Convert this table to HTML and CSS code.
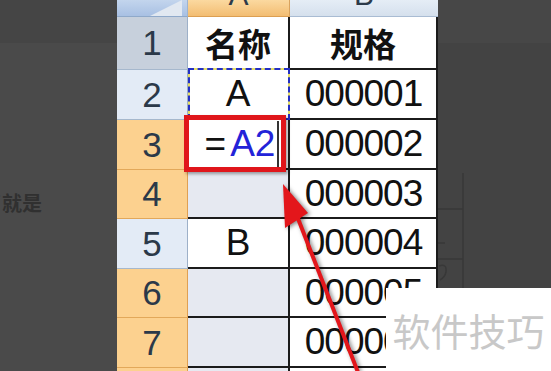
FILE: index.html
```html
<!DOCTYPE html>
<html lang="zh">
<head>
<meta charset="utf-8">
<title>Excel</title>
<link rel="stylesheet" href="styles.css">
</head>
<body>
<div class="page">
  <div class="left-bg">
    <div class="left-text">了就是</div>
  </div>
  <div class="sheet">
    <div class="corner"></div>
    <div class="colhead colA"><span>A</span></div>
    <div class="colhead colB"><span>B</span></div>

    <div class="rowhead dark">1</div>
    <div class="cell cjk">名称</div>
    <div class="cell cjk">规格</div>

    <div class="rowhead">2</div>
    <div class="cell ants">A</div>
    <div class="cell num">000001</div>

    <div class="rowhead sel">3</div>
    <div class="cell redbox"><span class="eq">=</span><span class="ref">A2</span><span class="caret"></span></div>
    <div class="cell num">000002</div>

    <div class="rowhead sel">4</div>
    <div class="cell hl"></div>
    <div class="cell num">000003</div>

    <div class="rowhead">5</div>
    <div class="cell">B</div>
    <div class="cell num">000004</div>

    <div class="rowhead sel">6</div>
    <div class="cell hl"></div>
    <div class="cell num">000005</div>

    <div class="rowhead sel">7</div>
    <div class="cell hl"></div>
    <div class="cell num">000006</div>

    <div class="rowhead sel">8</div>
    <div class="cell hl"></div>
    <div class="cell num">000007</div>
  </div>
  <div class="right-bg">
    <svg class="faint" width="113" height="371" viewBox="0 0 113 371">
      <path d="M25 173 V371 M0 209 H25 M0 259 H25 M0 243 H7" />
      <path d="M1 266 q8 -3 7 6 q-1 5 -6 8" />
    </svg>
  </div>
  <svg class="arrow" width="551" height="371" viewBox="0 0 551 371">
    <line x1="297" y1="216" x2="361" y2="380" />
    <polygon points="283,184 285,228 308,213" />
  </svg>
  <div class="watermark">软件技巧</div>
</div>
</body>
</html>
```

FILE: styles.css
```css
* { box-sizing: border-box; margin: 0; padding: 0; }
html, body { width: 551px; height: 371px; overflow: hidden; background: #4a4a4a; }
body { font-family: "Liberation Sans", Arial, sans-serif; }

.page {
  position: relative;
  display: flex;
  align-items: flex-start;
  width: 551px;
  height: 371px;
  overflow: hidden;
}

.left-bg {
  flex: none;
  width: 117px;
  height: 371px;
  overflow: hidden;
  background: linear-gradient(#454545 0 43px, #4a4a4a 43px);
}
.left-text {
  margin-top: 190px;
  margin-left: -18px;
  font: 700 20px/26px "Noto Sans CJK SC", sans-serif;
  color: #303030;
  white-space: nowrap;
}

.right-bg {
  flex: 1;
  height: 371px;
  background: linear-gradient(#474747 0 43px, #434343 43px);
}
.faint { display: block; }
.faint path { fill: none; stroke: #383838; stroke-width: 1.5; }

.sheet {
  flex: none;
  display: grid;
  grid-template-columns: 71px 102px 148px;
  grid-template-rows: 17px 53px 50px 50px 49px 50px 49px 50px 40px;
  height: 408px;
}

.corner {
  position: relative;
  background: linear-gradient(#c3d5ed, #a8c0e3);
  border-bottom: 1px solid #8fa9ca;
  border-right: 1px solid #9fb4cf;
}
.corner::after {
  content: "";
  position: absolute;
  left: 33px;
  top: 0;
  width: 32px;
  height: 16px;
  background: #e1e8f1;
  clip-path: polygon(100% 0, 100% 100%, 0 100%);
}

.colhead {
  display: flex;
  justify-content: center;
  overflow: hidden;
  font-size: 30px;
  line-height: 30px;
  color: #2c3a4a;
  border-bottom: 1px solid #a9bcd3;
}
.colhead span { margin-top: -20px; }
.colA {
  background: linear-gradient(#fbd9a0, #f3bd72);
  border-bottom-color: #dc9f52;
  border-right: 1px solid #d9a35e;
}
.colB { background: linear-gradient(#e5edf6, #d5e0ed); }

.rowhead {
  display: flex;
  align-items: center;
  justify-content: center;
  font-size: 35px;
  color: #2b3949;
  background: #e3ebf6;
  border-bottom: 1px solid #a6b8cd;
  border-right: 1px solid #9db0c8;
}
.rowhead.dark { background: #c7d0dc; }
.rowhead.sel {
  background: #fcd18f;
  border-bottom-color: #e2a85a;
  border-right-color: #dfa053;
}

.cell {
  position: relative;
  display: flex;
  align-items: center;
  justify-content: center;
  background: #fff;
  border-right: 2px solid #1b1b1b;
  border-bottom: 2px solid #1b1b1b;
  font-size: 37px;
  color: #111;
  white-space: nowrap;
}
.cell.num { letter-spacing: -1px; padding-left: 1px; }
.cell.hl { background: #e6e9f1; }
.cell.cjk { font: 700 33px "Noto Sans CJK SC", sans-serif; }

.ants { z-index: 1; }
.ants::before,
.ants::after {
  content: "";
  position: absolute;
  top: -2px;
  left: 0;
  right: -2px;
  bottom: -2px;
}
.ants::before { border: 2px solid #e6de66; }
.ants::after { border: 2px dashed #2430c4; }

.redbox { z-index: 2; padding-left: 8px; }
.redbox::after {
  content: "";
  position: absolute;
  top: -5px;
  left: -4px;
  right: 2px;
  bottom: -4px;
  border: 5px solid #e0161b;
  box-shadow: 2px 2px 3px rgba(0, 0, 0, 0.35);
}
.eq { color: #111; }
.ref { color: #2323d8; margin-left: 4px; }
.caret {
  display: inline-block;
  width: 2px;
  height: 46px;
  margin-left: 2px;
  background: #333;
}

.arrow {
  position: absolute;
  left: 0;
  top: 0;
  z-index: 5;
  pointer-events: none;
  filter: drop-shadow(2px 1px 2px rgba(0, 0, 0, 0.5));
}
.arrow line { stroke: #e3161b; stroke-width: 4; }
.arrow polygon { fill: #e3161b; }

.watermark {
  position: absolute;
  left: 386px;
  top: 288px;
  right: 0;
  bottom: 0;
  z-index: 6;
  display: flex;
  align-items: center;
  justify-content: center;
  background: #fff;
  font: 400 38px "Noto Sans CJK SC", sans-serif;
  color: #c8c8c8;
}
```
